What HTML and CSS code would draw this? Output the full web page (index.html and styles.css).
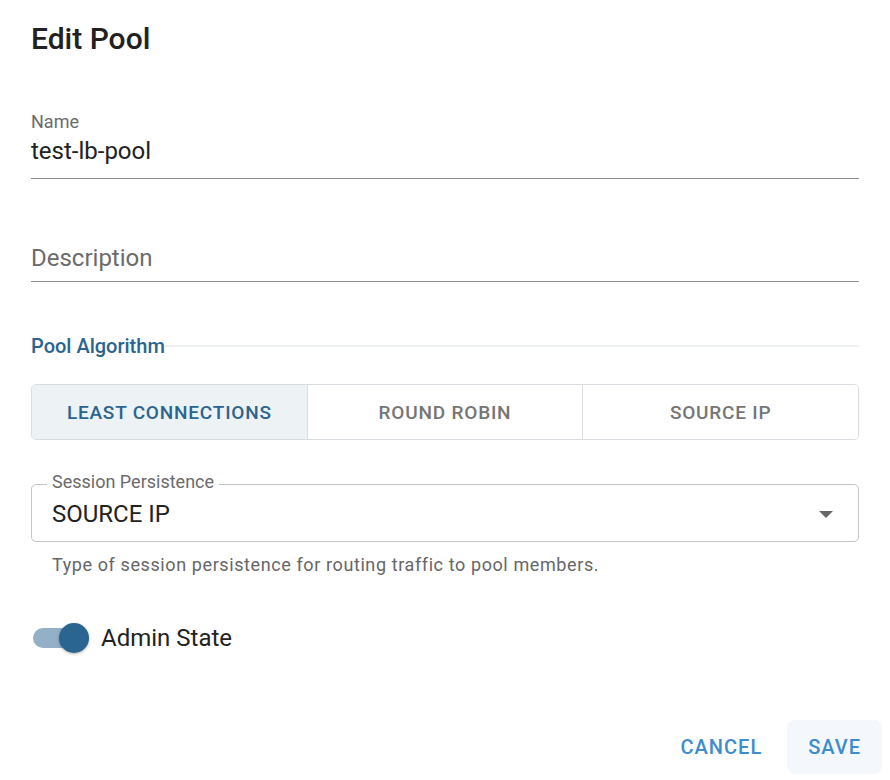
FILE: index.html
```html
<!DOCTYPE html>
<html lang="en">
<head>
  <meta charset="UTF-8">
  <title>Edit Pool</title>
  <link rel="stylesheet" href="styles.css">
</head>
<body>
  <div class="dialog">
    <h2 class="title">Edit Pool</h2>

    <div class="field">
      <label class="field-label">Name</label>
      <div class="field-input">test-lb-pool</div>
    </div>

    <div class="field field-empty">
      <div class="field-input placeholder">Description</div>
    </div>

    <div class="section-head">
      <span>Pool Algorithm</span>
      <div class="section-line"></div>
    </div>

    <div class="toggle-group">
      <button class="toggle selected">Least Connections</button>
      <button class="toggle">Round Robin</button>
      <button class="toggle">Source IP</button>
    </div>

    <div class="select-wrap">
      <div class="select-box">
        <span class="select-label">Session Persistence</span>
        <div class="select-value">SOURCE IP</div>
        <svg class="select-arrow" width="14" height="7" viewBox="0 0 14 7"><path d="M0 0h14l-7 7z" fill="#666"/></svg>
      </div>
      <div class="helper">Type of session persistence for routing traffic to pool members.</div>
    </div>

    <div class="switch-row">
      <div class="switch">
        <div class="switch-track"></div>
        <div class="switch-thumb"></div>
      </div>
      <span class="switch-label">Admin State</span>
    </div>

    <div class="actions">
      <button class="btn">Cancel</button>
      <button class="btn btn-save">Save</button>
    </div>
  </div>
</body>
</html>
```

FILE: styles.css
```css
body {
  margin: 0;
  padding: 0;
  font-family: 'Roboto', 'Liberation Sans', sans-serif;
  background: #fff;
  color: #222;
}

.dialog {
  padding: 0 31px;
}

.title {
  margin: 0;
  padding-top: 19px;
  font-size: 30px;
  line-height: 40px;
  font-weight: 500;
  color: #212121;
}

/* text fields */
.field {
  margin-top: 52px;
  border-bottom: 1px solid #8c8c8c;
  padding-bottom: 12px;
}

.field-label {
  display: block;
  font-size: 18px;
  line-height: 22px;
  color: #6b6b6b;
}

.field-input {
  margin-top: 3px;
  font-size: 24px;
  line-height: 30px;
}

.field-empty {
  margin-top: 64px;
  padding-bottom: 8px;
}

.field-empty .field-input {
  margin-top: 0;
}

.placeholder {
  color: #6b6b6b;
}

.section-head {
  display: flex;
  align-items: center;
  margin-top: 52px;
  font-size: 20px;
  line-height: 24px;
  font-weight: 500;
  color: #2a6490;
}

.section-line {
  flex: 1;
  height: 2px;
  background: #edf1f4;
}

/* algorithm toggle */
.toggle-group {
  display: flex;
  margin-top: 26px;
  border: 1px solid #d9dde1;
  border-radius: 5px;
  overflow: hidden;
}

.toggle {
  flex: 1;
  height: 54px;
  border: none;
  border-left: 1px solid #d9dde1;
  background: #fff;
  font-family: inherit;
  font-size: 19px;
  font-weight: 500;
  letter-spacing: 0.8px;
  text-transform: uppercase;
  color: #757575;
}

.toggle:first-child {
  border-left: none;
}

.toggle.selected {
  background: #edf2f5;
  color: #2a6490;
}

/* session persistence select */
.select-wrap {
  margin-top: 44px;
}

.select-box {
  position: relative;
  display: flex;
  align-items: flex-start;
  height: 58px;
  box-sizing: border-box;
  padding: 14px 25px 0 20px;
  border: 1px solid #c4c4c4;
  border-radius: 5px;
}

.select-label {
  position: absolute;
  left: 15px;
  top: -14px;
  padding: 0 5px;
  background: #fff;
  font-size: 18px;
  line-height: 22px;
  color: #6b6b6b;
}

.select-value {
  flex: 1;
  font-size: 24px;
  line-height: 30px;
}

.select-arrow {
  margin-top: 12px;
}

.helper {
  margin-top: 12px;
  padding-left: 21px;
  font-size: 18px;
  line-height: 22px;
  letter-spacing: 0.6px;
  color: #666;
}

/* admin state switch */
.switch-row {
  display: flex;
  align-items: center;
  height: 40px;
  margin-top: 42px;
}

.switch {
  position: relative;
  width: 56px;
  height: 32px;
  margin-left: 2px;
}

.switch-track {
  position: absolute;
  left: 0;
  top: 6px;
  width: 44px;
  height: 20px;
  border-radius: 10px;
  background: #93b0c6;
}

.switch-thumb {
  position: absolute;
  right: 0;
  top: 1px;
  width: 30px;
  height: 30px;
  border-radius: 50%;
  background: #2a6490;
  box-shadow: 0 1px 3px rgba(0, 0, 0, 0.3);
}

.switch-label {
  margin-left: 12px;
  font-size: 24px;
  line-height: 30px;
}

/* footer buttons */
.actions {
  display: flex;
  justify-content: flex-end;
  gap: 8px;
  margin-top: 62px;
  margin-right: -23px;
}

.btn {
  border: none;
  background: transparent;
  padding: 0 17px;
  height: 54px;
  border-radius: 8px;
  font-family: inherit;
  font-size: 20px;
  font-weight: 500;
  letter-spacing: 1px;
  text-transform: uppercase;
  color: #3d8dcc;
}

.btn-save {
  background: #f4f8fc;
  padding: 0 21px;
}
```
